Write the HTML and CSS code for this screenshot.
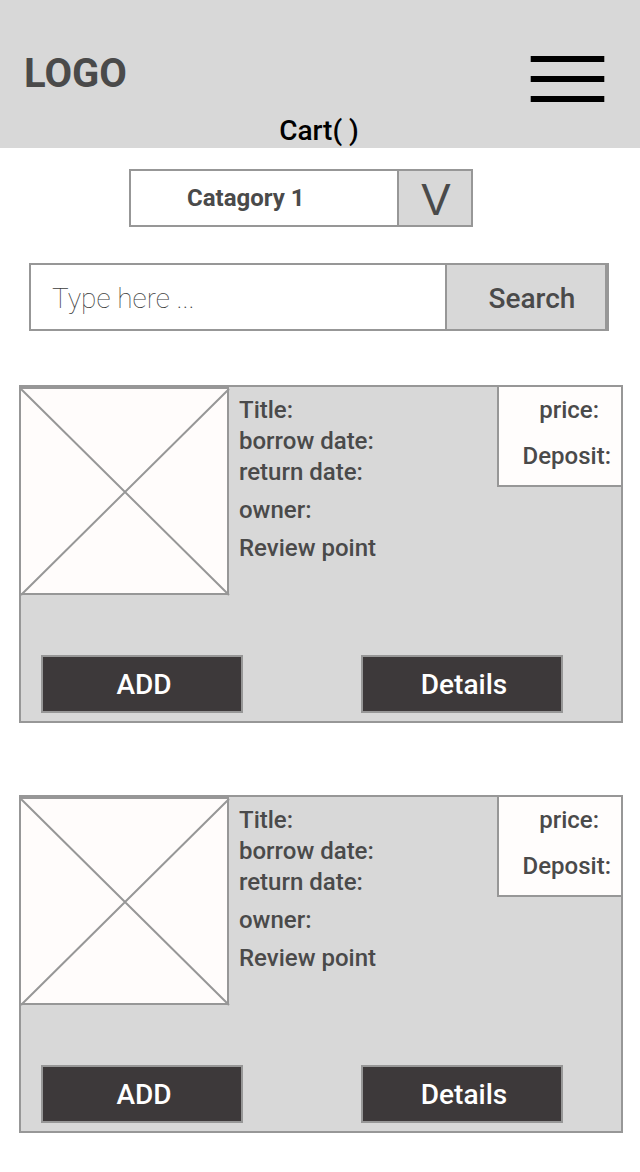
FILE: index.html
```html
<!DOCTYPE html>
<html lang="en">
<head>
<meta charset="utf-8">
<meta name="viewport" content="width=device-width, initial-scale=1">
<title>Cart</title>
<link rel="stylesheet" href="styles.css">
</head>
<body>
<header class="header">
  <div class="header-bar">
    <div class="logo">LOGO</div>
    <button class="menu" type="button" aria-label="Menu">
      <svg class="menu-icon" viewBox="0 0 75 46" aria-hidden="true"><path d="M0.7 3H74.3M0.7 23H74.3M0.7 43H74.3"/></svg>
    </button>
  </div>
  <a class="cart" href="#cart">Cart( )</a>
</header>
<main class="main">
  <div class="category">
    <select class="category-select" aria-label="Category">
      <option>Catagory 1</option>
    </select>
    <span class="category-arrow" aria-hidden="true">V</span>
  </div>
  <form class="search">
    <input class="search-input" type="text" placeholder="Type here ..." aria-label="Search items">
    <button class="search-button" type="button">Search</button>
  </form>
  <div class="cards">
    <article class="card">
      <div class="card-top">
        <svg class="picture" viewBox="0 0 208 208" role="img" aria-label="Item picture"><rect width="208" height="208"/><path d="M0 1H207V207H0M0 2L208 208M0 208L208 2"/></svg>
        <div class="info">
          <div class="dates">
            <p>Title:</p>
            <p>borrow date:</p>
            <p>return date:</p>
          </div>
          <p>owner:</p>
          <p>Review point</p>
        </div>
        <div class="price">
          <p class="price-label">price:</p>
          <p>Deposit:</p>
        </div>
      </div>
      <div class="actions">
        <button class="action" type="button">ADD</button>
        <button class="action" type="button">Details</button>
      </div>
    </article>
    <article class="card">
      <div class="card-top">
        <svg class="picture" viewBox="0 0 208 208" role="img" aria-label="Item picture"><rect width="208" height="208"/><path d="M0 1H207V207H0M0 2L208 208M0 208L208 2"/></svg>
        <div class="info">
          <div class="dates">
            <p>Title:</p>
            <p>borrow date:</p>
            <p>return date:</p>
          </div>
          <p>owner:</p>
          <p>Review point</p>
        </div>
        <div class="price">
          <p class="price-label">price:</p>
          <p>Deposit:</p>
        </div>
      </div>
      <div class="actions">
        <button class="action" type="button">ADD</button>
        <button class="action" type="button">Details</button>
      </div>
    </article>
  </div>
</main>
</body>
</html>
```

FILE: styles.css
```css
:root {
  --line: #979797;
  --panel: #d8d8d8;
  --text: #4a4a4a;
}
* { box-sizing: border-box; }
body {
  margin: 0;
  background: #fff;
  color: var(--text);
  font-family: Roboto, "Liberation Sans", sans-serif;
  font-size: 24px;
  font-weight: 500;
}
p { margin: 0; }
button, select, input {
  margin: 0;
  border: 0;
  border-radius: 0;
  font: inherit;
  color: inherit;
}
.header {
  display: flex;
  flex-direction: column;
  padding-top: 50px;
  background: var(--panel);
}
.header-bar {
  display: flex;
  justify-content: space-between;
  align-items: flex-start;
  height: 60px;
  padding: 0 35px 0 24px;
}
.logo {
  font-size: 40px;
  line-height: 48px;
  font-weight: 700;
}
.menu {
  display: flex;
  padding: 6px 0 0;
  background: none;
}
.menu-icon {
  width: 75px;
  height: 46px;
  fill: none;
  stroke: #000;
  stroke-width: 6;
}
.cart {
  align-self: center;
  padding: 5px 2px 1px 0;
  font-size: 28px;
  line-height: 32px;
  color: #000;
  text-decoration: none;
}
.main { padding: 21px 17px 38px 19px; }
.category {
  display: flex;
  width: 344px;
  height: 58px;
  margin-left: 110px;
  border: 2px solid var(--line);
}
.category-select {
  flex: 1;
  min-width: 0;
  padding: 0 0 0 56px;
  appearance: none;
  background: #fff;
  font-weight: 700;
}
.category-arrow {
  display: flex;
  align-items: center;
  justify-content: center;
  width: 74px;
  padding: 4px 0 0 2px;
  border-left: 2px solid var(--line);
  background: var(--panel);
  font-family: "Liberation Sans", Arial, sans-serif;
  font-size: 44px;
  line-height: 48px;
  font-weight: 400;
}
.search {
  display: flex;
  height: 68px;
  margin: 36px 14px 54px 10px;
  border: 2px solid var(--line);
  border-right-width: 4px;
}
.search-input {
  flex: 1;
  min-width: 0;
  padding: 2px 21px 0;
  background: #fff;
  font-size: 28px;
  font-weight: 100;
}
.search-input::placeholder {
  color: #333;
  opacity: 0.95;
}
.search-button {
  width: 160px;
  padding: 2px 0 0 12px;
  border-left: 2px solid var(--line);
  background: var(--panel);
  font-size: 28px;
}
.cards {
  display: grid;
  gap: 72px;
}
.card {
  border: 2px solid var(--line);
  background: var(--panel);
}
.card-top {
  display: flex;
  align-items: flex-start;
}
.picture {
  flex: none;
  width: 208px;
  height: 208px;
  fill: #fffcfb;
  overflow: visible;
}
.picture path {
  fill: none;
  stroke: var(--line);
  stroke-width: 2;
}
.info {
  display: grid;
  flex: 1;
  gap: 7px;
  padding: 8px 0 0 10px;
  line-height: 31px;
}
.price {
  display: grid;
  gap: 14px;
  justify-items: end;
  width: 124px;
  height: 100px;
  padding: 7px 10px 0 0;
  align-content: start;
  border: solid var(--line);
  border-width: 0 0 2px 2px;
  background: #fffdfc;
  line-height: 32px;
}
.price-label { padding-right: 12px; }
.actions {
  display: flex;
  flex-wrap: wrap;
  gap: 20px 118px;
  padding: 60px 20px 8px;
}
.action {
  width: 202px;
  height: 58px;
  padding: 0 0 0 4px;
  border: 2px solid var(--line);
  background: #3d393a;
  color: #fff;
  font-size: 28px;
}
```
